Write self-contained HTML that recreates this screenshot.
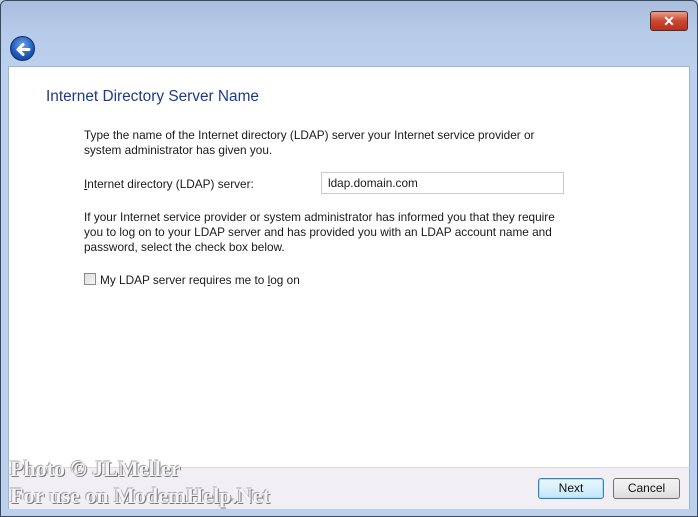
<!DOCTYPE html>
<html><head><meta charset="utf-8"><style>
*{margin:0;padding:0;box-sizing:border-box}
body{width:698px;height:517px;overflow:hidden;position:relative;font-family:"Liberation Sans",sans-serif;background:#b9d1ea}
.frame{position:absolute;left:0;top:0;width:698px;height:517px;border:1px solid #3a4a5c;border-radius:6px 6px 0 0;background:linear-gradient(#a8bedc 0,#b6cbe8 30px,#bcd1ee 66px,#bcd1ee 100%)}
.content{position:absolute;left:8px;top:66px;width:682px;height:402px;background:#fff;border:1px solid #9fb4cf;border-bottom:none}
.footer{position:absolute;left:8px;top:467px;width:682px;height:42px;background:#f1eff4;border-top:1px solid #dcdce0;border-left:1px solid #9fb4cf;border-right:1px solid #9fb4cf}
.t{position:absolute;white-space:nowrap;font-size:11.8px;color:#1a1a1a;line-height:15px}
h1{position:absolute;left:46px;top:88px;font-weight:normal;font-size:15.4px;color:#1e3a8a;white-space:nowrap}
.close{position:absolute;left:650px;top:11px;width:38px;height:20px;border:1px solid #5a2a22;border-radius:3px;background:linear-gradient(#e8a08c,#c9472f 50%,#b8311c);color:#fff;font-weight:bold;font-size:14px;text-align:center;line-height:18px}
.back{position:absolute;left:10px;top:36px;width:25px;height:25px;border-radius:50%;background:radial-gradient(circle at 50% 35%,#6fa6e8,#1d57b8 60%,#123a85);border:1px solid #0f3070}
.input{position:absolute;left:321px;top:172px;width:243px;height:22px;border:1px solid #c8ccd2;background:#fff}
.cb{position:absolute;left:84px;top:273px;width:12px;height:12px;border:1px solid #8b8b8b;background:linear-gradient(135deg,#dcdcdc,#f6f6f6)}
.btn{position:absolute;top:478px;height:21px;border:1px solid #707070;border-radius:3px;background:linear-gradient(#f2f2f2,#ebebeb 50%,#dbdbdb);font-size:12px;text-align:center;line-height:19px;color:#111}
.wm{position:absolute;left:10px;font-family:"Liberation Serif",serif;font-weight:bold;font-size:22px;color:#f4f4f8;text-shadow:1px 1px 0 #777,-1px -1px 0 #aaa;white-space:nowrap}
</style></head><body>
<div class="frame"></div>
<div class="close">✕</div>
<div class="back"><svg width="25" height="25" viewBox="0 0 25 25"><path d="M18 12.5H8M12 7.5L7 12.5L12 17.5" stroke="#fff" stroke-width="3" fill="none" stroke-linecap="round" stroke-linejoin="round"/></svg></div>
<div class="content"></div>
<div class="footer"></div>
<h1>Internet Directory Server Name</h1>
<div class="t" style="left:84px;top:128px">Type the name of the Internet directory (LDAP) server your Internet service provider or<br>system administrator has given you.</div>
<div class="t" style="left:84px;top:177px"><u>I</u>nternet directory (LDAP) server:</div>
<div class="input"></div>
<div class="t" style="left:328px;top:176px">ldap.domain.com</div>
<div class="t" style="left:84px;top:210px">If your Internet service provider or system administrator has informed you that they require<br>you to log on to your LDAP server and has provided you with an LDAP account name and<br>password, select the check box below.</div>
<div class="cb"></div>
<div class="t" style="left:100px;top:273px">My LDAP server requires me to <u>l</u>og on</div>
<div class="wm" style="top:456px">Photo © JLMeller</div>
<div class="wm" style="top:483px">For use on ModemHelp.Net</div>
<div class="btn" style="left:538px;width:66px;border-color:#3c7fb1;background:linear-gradient(#eaf6fd,#d9f0fc 50%,#bee6fd);box-shadow:inset 0 0 0 1px #a8dcf7">Next</div>
<div class="btn" style="left:613px;width:67px">Cancel</div>
</body></html>
